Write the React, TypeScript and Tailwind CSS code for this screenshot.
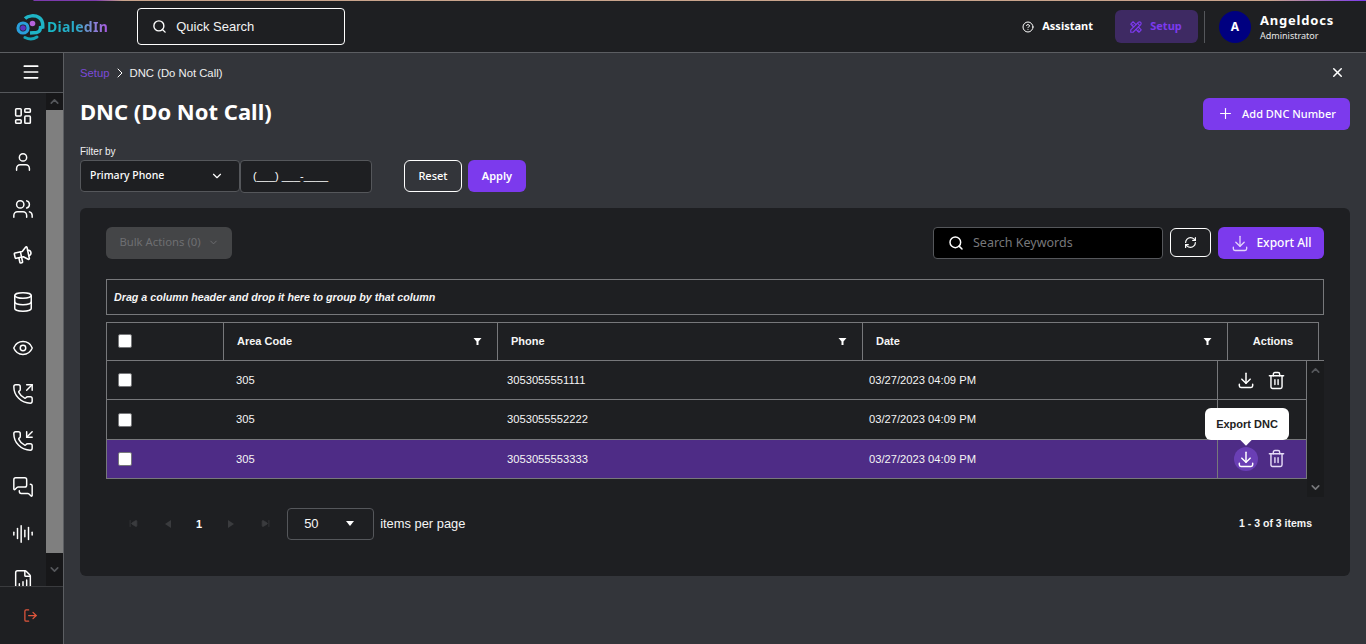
import {
  AudioLines,
  ChevronDown,
  ChevronRight,
  ChevronUp,
  CircleHelp,
  Database,
  Eye,
  FileBarChart,
  LogOut,
  Menu,
  MessagesSquare,
  PhoneIncoming,
  PhoneOutgoing,
  Plus,
  RefreshCw,
  Search,
  SkipBack,
  SkipForward,
  Trash2,
  User,
  Users,
  X,
} from 'lucide-react'
import { TbDownload, TbLayoutDashboard, TbSpeakerphone, TbTools } from 'react-icons/tb'
import clsx from 'clsx'

const ui = "font-['Noto_Sans',sans-serif]"
const arial = "font-['Liberation_Sans',sans-serif]"

const navIcons = [User, Users, null, Database, Eye, PhoneOutgoing, PhoneIncoming, MessagesSquare, AudioLines, FileBarChart]

const rows = [
  { phone: '3053055551111' },
  { phone: '3053055552222' },
  { phone: '3053055553333', active: true },
]

const Logo = () => (
  <div className="flex items-center">
    <svg width="29" height="27" viewBox="0 0 29 27" fill="none" className="mt-[1px]">
      <path
        d="M9 4.500C12 1.500 19 .8 23 3.500c3 2 4 5.500 3.800 9.500l-2.300.5c0 2.500-1.500 4.500-4 5l-6.500.5"
        stroke="#1fb5c6"
        strokeWidth="3.400"
      />
      <path d="M9 23.500c4 2 9 1.500 12-.5" stroke="#16a5b6" strokeWidth="3" strokeLinecap="round" />
      <circle cx="7" cy="14" r="5" stroke="#2a9fdc" strokeWidth="3.200" />
      <circle cx="7" cy="14" r="2.800" fill="#5b35c0" />
      <circle cx="16.500" cy="9.500" r="2.800" fill="#b663dc" />
    </svg>
    <span className={clsx(ui, 'ml-[2px] bg-gradient-to-r from-[#14b8c4] via-[#2aa8c8] to-[#a855e0] bg-clip-text text-[14px] font-bold tracking-[0.3px] text-transparent')}>
      DialedIn
    </span>
  </div>
)

const TopBar = () => (
  <header className="flex h-[53px] shrink-0 flex-col border-b border-[#5c5e62] bg-[#1e1f22]">
    <div className="h-px bg-[linear-gradient(90deg,#1e1f22_0%,#1e1f22_2.400%,#7c3aad_2.500%,#7c3aad_7%,#c9a48c_9%,#c9a48c_93%,#7c3aed_100%)]" />
    <div className="flex flex-1 items-center pr-[31px] pl-4">
      <Logo />
      <div className="ml-[29px] flex h-[37px] w-[208px] items-center gap-[9px] rounded border border-white pl-[14px]">
        <Search size={15} strokeWidth={2.200} className="text-white" />
        <span className={clsx(arial, 'text-[13px] text-[#f2f2f2]')}>Quick Search</span>
      </div>
      <div className="ml-auto flex items-center">
        <CircleHelp size={12} className="text-white" />
        <span className={clsx(ui, 'ml-[8px] text-[11px] font-bold text-white')}>Assistant</span>
        <div className="ml-[22px] flex h-[33px] w-[83px] items-center justify-center gap-[7px] rounded-md bg-[#3e2a63] pr-[2px]">
          <TbTools size={14} className="text-[#7c3aed]" />
          <span className={clsx(ui, 'text-[11px] font-bold text-[#7c3aed]')}>Setup</span>
        </div>
        <div className="ml-[6px] h-8 w-px bg-[#55575b]" />
        <div className="ml-[14px] flex size-8 items-center justify-center rounded-full bg-[#000080] text-xs font-bold text-white">
          <span className={ui}>A</span>
        </div>
        <div className="ml-[9px] flex w-[75px] flex-col">
          <span className={clsx(ui, 'text-[13px] leading-[17px] font-bold tracking-[0.8px] text-white')}>Angeldocs</span>
          <span className={clsx(ui, 'text-[9px] leading-[13px] text-[#e8e8e8]')}>Administrator</span>
        </div>
      </div>
    </div>
  </header>
)

const Sidebar = () => (
  <aside className="flex w-[64px] shrink-0 flex-col border-r border-[#5c5e62] bg-[#1e1f22]">
    <div className="flex h-[40px] shrink-0 items-center justify-center border-b border-[#55575b] pr-[2px] pb-[2px]">
      <Menu size={20} className="text-white" />
    </div>
    <div className="flex min-h-0 flex-1">
      <div className="flex w-[46px] flex-col items-center gap-[24.400px] overflow-hidden pt-[12px]">
        <TbLayoutDashboard size={22} className="shrink-0 text-white" strokeWidth={1.700} />
        {navIcons.map((Icon, i) =>
          Icon ? (
            <Icon key={i} size={22} strokeWidth={1.600} className="shrink-0 text-white" />
          ) : (
            <TbSpeakerphone key={i} size={22} strokeWidth={1.700} className="shrink-0 -rotate-12 text-white" />
          ),
        )}
      </div>
      <div className="flex w-[17px] flex-col bg-[#171719]">
        <div className="flex h-[17px] items-center justify-center">
          <ChevronUp size={13} strokeWidth={3} className="text-[#55575b]" />
        </div>
        <div className="flex-1 bg-[#7f7f7f]" />
        <div className="flex h-[33px] items-center justify-center">
          <ChevronDown size={13} strokeWidth={3} className="text-[#55575b]" />
        </div>
      </div>
    </div>
    <div className="flex h-[58px] shrink-0 items-center justify-center border-t border-[#3a3b3e] pr-[3px]">
      <LogOut size={15} strokeWidth={2} className="text-[#e0563c]" />
    </div>
  </aside>
)

const Filters = () => (
  <div className="mt-[15px] flex items-end">
    <div className="flex flex-col">
      <span className={clsx(arial, 'text-[10px] leading-[13px] text-[#f0f0f0]')}>Filter by</span>
      <div className="mt-[2px] flex">
        <div className="flex h-[32px] w-[160px] items-center justify-between rounded border border-[#55575b] bg-[#1e1f22] pr-[15px] pl-[9px]">
          <span className={clsx(ui, 'text-[10.500px] font-medium text-white')}>Primary Phone</span>
          <ChevronDown size={14} className="text-white" />
        </div>
        <div className="flex h-[33px] w-[132px] items-center rounded border border-[#55575b] bg-[#1e1f22] pl-[12px]">
          <span className={clsx(arial, 'text-[11px] text-white')}>(___) ___-____</span>
        </div>
      </div>
    </div>
    <button className={clsx(ui, 'mb-px ml-[32px] h-[32px] w-[58px] rounded-md border border-white text-[11px] font-medium text-white')}>
      Reset
    </button>
    <button className={clsx(ui, 'mb-px ml-[6px] h-[32px] w-[58px] rounded-md bg-[#7c3aed] text-[11px] font-semibold text-white')}>
      Apply
    </button>
  </div>
)

const Toolbar = () => (
  <div className="flex items-center justify-between">
    <div className={clsx(ui, 'flex h-[32px] w-[126px] items-center justify-center gap-[7px] rounded-md bg-[#444547] text-[11.300px] text-[#6e6f72]')}>
      Bulk Actions (0)
      <ChevronDown size={11} className="text-[#6e6f72]" />
    </div>
    <div className="flex items-center">
      <div className="flex h-[32px] w-[230px] items-center gap-[9px] rounded border border-[#55575b] bg-black pl-[14px]">
        <Search size={16} strokeWidth={2.200} className="text-white" />
        <span className={clsx(ui, 'text-[12.500px] text-[#77787b]')}>Search Keywords</span>
      </div>
      <div className="ml-[7px] flex h-[29px] w-[41px] items-center justify-center rounded-md border border-white">
        <RefreshCw size={13} strokeWidth={2.200} className="text-white" />
      </div>
      <button className={clsx(ui, 'ml-[7px] flex h-[32px] w-[106px] items-center justify-center gap-[6px] rounded-md bg-[#7c3aed] text-xs font-medium text-white')}>
        <TbDownload size={20} strokeWidth={1.600} className="text-[#e3d3fb]" />
        Export All
      </button>
    </div>
  </div>
)

const HeaderCell = ({ label }: { label: string }) => (
  <div className="flex items-center justify-between border-r border-[#77787b] pr-[15px] pl-[13px]">
    <span className="text-[11px] font-bold text-[#f5f5f5]">{label}</span>
    <svg width="9" height="9" viewBox="0 0 9 9" className="fill-white">
      <path d="M.5 1h8L5.500 4.500V8h-2V4.500z" />
    </svg>
  </div>
)

const DataTable = () => (
  <div className={clsx(arial, 'mt-[20px]')}>
    <div className="border border-[#77787b] px-[7px] py-[10px] text-[10.700px] leading-[14px] font-bold text-[#f5f5f5] italic">
      Drag a column header and drop it here to group by that column
    </div>
    <div className="mt-[7px] flex w-[1213px] border-t border-r border-l border-[#77787b]">
      <div className="grid h-[37px] flex-1 grid-cols-[117px_274px_365px_365px_90px]">
        <div className="flex items-center border-r border-[#77787b] pl-[11px]">
          <span className="size-[14px] rounded-[2px] border border-[#77787b] bg-white" />
        </div>
        <HeaderCell label="Area Code" />
        <HeaderCell label="Phone" />
        <HeaderCell label="Date" />
        <div className="flex items-center justify-center text-[11px] font-bold text-[#f5f5f5]">Actions</div>
      </div>
    </div>
    <div className="relative flex border-t border-[#77787b]">
      <div className="w-[1201px] pb-[17px]">
        {rows.map((row) => (
          <div
            key={row.phone}
            className={clsx(
              'grid h-[39.400px] grid-cols-[129px_261px_365px_355px_89px] border-r border-b border-l border-[#77787b] text-[11.200px] text-[#f5f5f5]',
              row.active && 'bg-[#4e2c86]',
            )}
          >
            <div className="flex items-center pl-[11px]">
              <span className="size-[14px] rounded-[2px] border border-[#77787b] bg-white" />
            </div>
            <div className="flex items-center">305</div>
            <div className="flex items-center pl-[10px]">{row.phone}</div>
            <div className="flex items-center pl-[7px]">03/27/2023 04:09 PM</div>
            <div className="flex items-center gap-[9px] border-l border-[#77787b] pl-[16px]">
              <span className={clsx('flex size-6 items-center justify-center rounded-full', row.active && 'bg-[#6a3fb5]')}>
                <TbDownload size={20} strokeWidth={1.800} className="text-white" />
              </span>
              <Trash2 size={19} strokeWidth={1.800} className={row.active ? 'text-[#e6dcf7]' : 'text-white'} />
            </div>
          </div>
        ))}
      </div>
      <div className="flex h-[136px] w-[17px] flex-col items-center justify-between bg-[#1a1b1d] py-[3px]">
        <ChevronUp size={13} strokeWidth={3} className="text-[#55575b]" />
        <ChevronDown size={13} strokeWidth={3} className="text-[#77787b]" />
      </div>
      <div className="absolute top-[47px] left-[1099px] flex h-[32px] w-[84px] items-center justify-center rounded-md bg-white text-[11px] font-bold text-[#222]">
        Export DNC
        <span className="absolute -bottom-[4px] left-[37px] size-2 rotate-45 bg-white" />
      </div>
    </div>
  </div>
)

const Pager = () => (
  <div className={clsx(arial, 'mt-[11px] flex items-center pl-[23px]')}>
    <SkipBack size={9} className="fill-[#3a3b3e] text-[#3a3b3e]" />
    <svg width="6" height="8" viewBox="0 0 6 8" className="ml-[27px] fill-[#3a3b3e]">
      <path d="M6 0v8L0 4z" />
    </svg>
    <span className="ml-[25px] text-[11px] font-bold text-white">1</span>
    <svg width="6" height="8" viewBox="0 0 6 8" className="ml-[26px] fill-[#3a3b3e]">
      <path d="M0 0v8l6-4z" />
    </svg>
    <SkipForward size={9} className="ml-[27px] fill-[#3a3b3e] text-[#3a3b3e]" />
    <div className="ml-[17px] flex h-[32px] w-[87px] items-center rounded border border-[#55575b] pl-[16px]">
      <span className="text-[13px] text-[#f5f5f5]">50</span>
      <svg width="8" height="5" viewBox="0 0 8 5" className="ml-[27px] fill-white">
        <path d="M0 0h8L4 5z" />
      </svg>
    </div>
    <span className="ml-[6px] text-[12.900px] text-[#f5f5f5]">items per page</span>
    <span className="mr-[12px] ml-auto text-[10.500px] font-bold text-[#f5f5f5]">1 - 3 of 3 items</span>
  </div>
)

export default function App() {
  return (
    <div className="flex h-[644px] w-[1366px] flex-col overflow-hidden bg-[#33353a]">
      <TopBar />
      <div className="flex min-h-0 flex-1">
        <Sidebar />
        <main className="flex min-w-0 flex-1 flex-col px-[16px] pt-[12px]">
          <div className="flex items-center justify-between">
            <div className={clsx(arial, 'flex items-center text-[11.300px]')}>
              <span className="text-[#7c4ad8]">Setup</span>
              <ChevronRight size={16} strokeWidth={1.500} className="mx-[2px] text-white" />
              <span className="text-[#f0f0f0]">DNC (Do Not Call)</span>
            </div>
            <X size={15} strokeWidth={2.400} className="mr-[5px] -mt-[2px] text-white" />
          </div>
          <div className="mt-[6px] flex items-start justify-between">
            <h1 className={clsx(ui, 'pt-[7px] text-[22px] leading-[32px] font-bold text-white')}>DNC (Do Not Call)</h1>
            <button className={clsx(ui, 'mt-[10px] flex h-[32px] w-[147px] items-center justify-center gap-[8px] rounded-md bg-[#7c3aed] text-[11px] font-medium text-white')}>
              <Plus size={17} strokeWidth={1.600} />
              Add DNC Number
            </button>
          </div>
          <Filters />
          <section className="mt-[15px] h-[368px] rounded-md bg-[#1e1f22] px-[26px] pt-[19px]">
            <Toolbar />
            <DataTable />
            <Pager />
          </section>
        </main>
      </div>
    </div>
  )
}
